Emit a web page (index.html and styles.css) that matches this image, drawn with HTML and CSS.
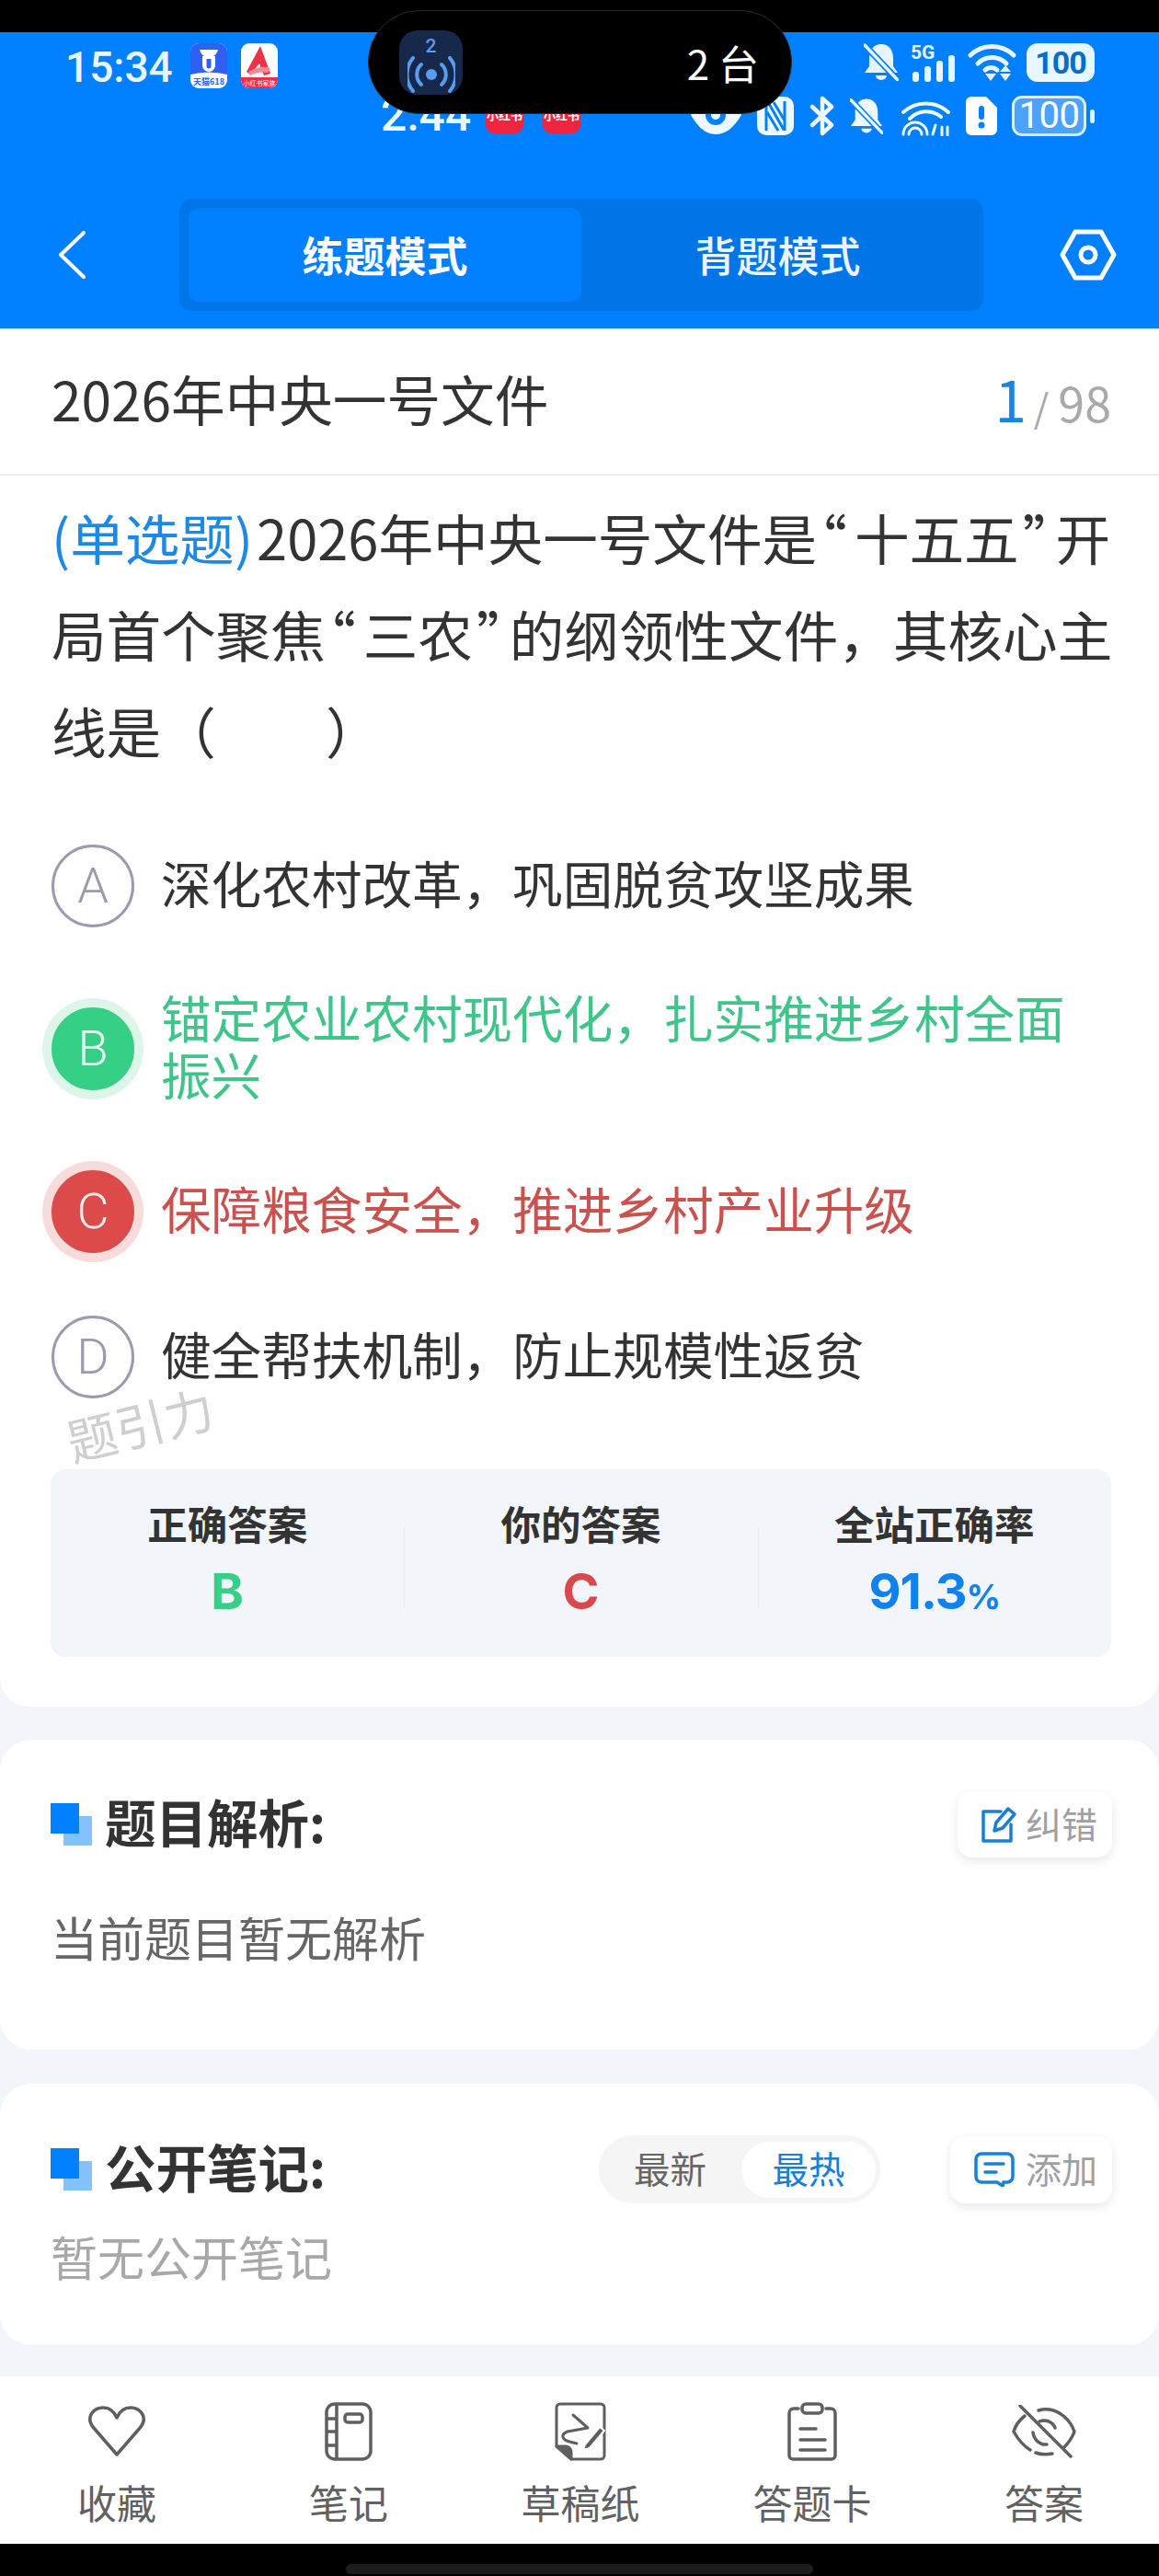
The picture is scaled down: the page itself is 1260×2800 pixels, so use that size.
FILE: index.html
```html
<!DOCTYPE html>
<html lang="zh-CN">
<head>
<meta charset="utf-8">
<title>2026年中央一号文件</title>
<link rel="stylesheet" href="styles.css">
</head>
<body>
<div class="page">
  <div class="sys-top"></div>

  <div class="island">
    <div class="island-app">
      <span class="island-num">2</span>
      <svg width="52" height="40" viewBox="0 0 52 40" fill="none" stroke="#5a9cf0" stroke-width="4" stroke-linecap="round">
        <circle cx="26" cy="20" r="6" fill="#5a9cf0" stroke="none"/>
        <path d="M15 9a15 15 0 0 0 0 22"/><path d="M37 9a15 15 0 0 1 0 22"/>
        <path d="M6 2a28 28 0 0 0 0 36"/><path d="M46 2a28 28 0 0 1 0 36"/>
      </svg>
    </div>
    <span class="island-text">2 台</span>
  </div>

  <header class="header">
    <div class="status-row status-one">
      <span class="clock">15:34</span>
      <svg class="app-ico" width="40" height="49" viewBox="0 0 40 49">
        <rect width="40" height="49" rx="9" fill="#fff"/>
        <path d="M0 9a9 9 0 0 1 9-9h22a9 9 0 0 1 9 9v25q-20 -5 -40 0z" fill="#2f60f2"/>
        <path d="M10 7q2 6 5 7h10q3-1 5-7M13 14h14v10a7 7 0 0 1-14 0zM17.500 17h5v8a2.500 2.500 0 0 1-5 0z" fill="#fff" fill-rule="evenodd"/>
        <text x="20" y="45" text-anchor="middle" class="app-label-blue">天猫618</text>
      </svg>
      <svg class="app-ico app-gap" width="40" height="49" viewBox="0 0 40 49">
        <rect width="40" height="49" rx="9" fill="#fff"/>
        <path d="M0 37h40v3a9 9 0 0 1-9 9H9a9 9 0 0 1-9-9z" fill="#ee2f49"/>
        <path d="M21 3l11 30-7 2-5-13-10 12-4-3z" fill="#ee3148"/>
        <path d="M8 31q14 -8 24 -4l-3 5q-10 -2 -19 3z" fill="#f58a94"/>
        <text x="20" y="46" text-anchor="middle" class="app-label-white">小红书家族</text>
      </svg>
      <div class="status-right">
        <svg width="38" height="41" viewBox="0 0 38 41">
          <path d="M19 1c8 0 13 6 13 15v9l5 7H1l5-7v-9C6 7 11 1 19 1z" fill="#e6f5ff"/>
          <path d="M13 35h12a6 5 0 0 1-12 0z" fill="#e6f5ff"/>
          <path d="M1 2l36 38" stroke="#0080ff" stroke-width="7"/>
          <path d="M1 2l36 38" stroke="#e6f5ff" stroke-width="3.500" stroke-linecap="round"/>
        </svg>
        <svg width="50" height="42" viewBox="0 0 50 42" class="ico-5g">
          <text x="1" y="17" class="label-5g">5G</text>
          <rect x="3" y="31" width="7" height="11" rx="3" fill="#e6f5ff"/>
          <rect x="16" y="25" width="7" height="17" rx="3" fill="#e6f5ff"/>
          <rect x="29" y="19" width="7" height="23" rx="3" fill="#e6f5ff"/>
          <rect x="42" y="13" width="7" height="29" rx="3" fill="#e6f5ff"/>
        </svg>
        <svg width="53" height="42" viewBox="0 0 53 42" fill="none" stroke="#e6f5ff" stroke-width="5" stroke-linecap="round" class="ico-wifi">
          <path d="M3 13a34 34 0 0 1 47 0"/><path d="M11 22a22 22 0 0 1 31 0"/>
          <path d="M19 29a10 10 0 0 1 13 0" />
          <path d="M19 33h12l-6 8z" fill="#e6f5ff" stroke="none"/>
          <path d="M41 24l6 7H35zM35 33h12l-6 8z" fill="#e6f5ff" stroke="none"/>
        </svg>
        <div class="bat-solid"><span>100</span></div>
      </div>
    </div>

    <div class="status-row status-two">
      <span class="clock clock-two">2:44</span>
      <span class="red-ico">小红书</span>
      <span class="red-ico red-gap">小红书</span>
      <div class="status-right status-right-two">
        <svg width="57" height="42" viewBox="0 0 57 42">
          <path d="M1 20C10 7 19 2 28 2s19 5 28 18c-9 15-18 21-28 21S10 35 1 20z" fill="#eef8ff"/>
          <circle cx="28" cy="20" r="11" fill="#0080ff"/><circle cx="28" cy="20" r="5" fill="#eef8ff"/>
        </svg>
        <svg width="40" height="42" viewBox="0 0 40 42" class="gap-16">
          <rect width="40" height="42" rx="10" fill="#eef8ff"/>
          <path d="M10 5v32M30 5v32M12 6l17 30M18 6l12 20M11 17l12 20" stroke="#0080ff" stroke-width="3" fill="none"/>
        </svg>
        <svg width="28" height="44" viewBox="0 0 28 44" fill="none" stroke="#eef8ff" stroke-width="4.500" stroke-linecap="round" stroke-linejoin="round" class="gap-17">
          <path d="M3 12l21 20-10 9V3l10 9-21 20"/>
        </svg>
        <svg width="36" height="42" viewBox="0 0 38 41" class="gap-16">
          <path d="M19 1c8 0 13 6 13 15v9l5 7H1l5-7v-9C6 7 11 1 19 1z" fill="#eef8ff"/>
          <path d="M13 35h12a6 5 0 0 1-12 0z" fill="#eef8ff"/>
          <path d="M1 2l36 38" stroke="#0080ff" stroke-width="7"/>
          <path d="M1 2l36 38" stroke="#eef8ff" stroke-width="3.500" stroke-linecap="round"/>
        </svg>
        <svg width="55" height="44" viewBox="0 0 55 44" fill="none" stroke="#eef8ff" stroke-width="4" stroke-linecap="round" class="gap-19">
          <path d="M3 18a36 36 0 0 1 49 0"/><path d="M10 25a25 25 0 0 1 34 -2"/>
          <path d="M3 42a13 13 0 1 1 26 0" stroke-width="3"/><path d="M9 42a7 7 0 1 1 14 0" stroke-width="3"/>
          <path d="M35 42l3-10" stroke-width="3"/><path d="M45 34v9M51 34v9" stroke-width="3"/>
        </svg>
        <svg width="34" height="42" viewBox="0 0 34 42" class="gap-16">
          <path d="M6 0h16l12 12v24a6 6 0 0 1-6 6H6a6 6 0 0 1-6-6V6a6 6 0 0 1 6-6z" fill="#fff"/>
          <rect x="14" y="10" width="6" height="15" rx="3" fill="#0080ff"/><circle cx="17" cy="31" r="3.500" fill="#0080ff"/>
        </svg>
        <div class="bat-line"><span>100</span></div>
        <i class="bat-cap"></i>
      </div>
    </div>

    <nav class="nav-row">
      <svg class="back" width="30" height="52" viewBox="0 0 30 52" fill="none" stroke="#fff" stroke-width="4" stroke-linecap="round" stroke-linejoin="round">
        <path d="M28 2L3 26l25 24"/>
      </svg>
      <div class="segment">
        <span class="seg-item seg-active">练题模式</span>
        <span class="seg-item">背题模式</span>
      </div>
      <svg class="gear" width="62" height="56" viewBox="0 0 62 56" fill="none" stroke="#fff" stroke-width="5" stroke-linejoin="round">
        <path d="M17 3h28l14 25-14 25H17L3 28z"/>
        <circle cx="31" cy="28" r="8"/>
      </svg>
    </nav>
  </header>

  <main class="card card-main">
    <div class="subhead">
      <h1 class="paper-title">2026年中央一号文件</h1>
      <div class="counter"><span class="counter-now">1</span><span class="counter-slash">/</span><span class="counter-all">98</span></div>
    </div>

    <p class="question"><span class="q-type">(单选题)</span>2026年中央一号文件是<span class="q-open">“</span>十五五<span class="q-close">”</span>开局首个聚焦<span class="q-open">“</span>三农<span class="q-close">”</span>的纲领性文件，其核心主线是（　　）</p>

    <div class="options">
      <div class="option"><span class="badge">A</span><span class="opt-text">深化农村改革，巩固脱贫攻坚成果</span></div>
      <div class="option option-ok"><span class="badge">B</span><span class="opt-text">锚定农业农村现代化，扎实推进乡村全面振兴</span></div>
      <div class="option option-bad"><span class="badge">C</span><span class="opt-text">保障粮食安全，推进乡村产业升级</span></div>
      <div class="option"><span class="badge">D</span><span class="opt-text">健全帮扶机制，防止规模性返贫</span></div>
    </div>
    <span class="watermark">题引力</span>

    <div class="stats">
      <div class="stat"><span class="stat-label">正确答案</span><span class="stat-value val-ok">B</span></div>
      <div class="stat"><span class="stat-label">你的答案</span><span class="stat-value val-bad">C</span></div>
      <div class="stat"><span class="stat-label">全站正确率</span><span class="stat-value val-rate">91.3<small>%</small></span></div>
    </div>
  </main>

  <section class="card card-analysis">
    <div class="sec-head">
      <i class="sec-mark"></i>
      <h2 class="sec-title">题目解析:</h2>
      <button class="mini-btn btn-fix">
        <svg width="40" height="40" viewBox="0 0 40 40" fill="none" stroke="#1a7fd8" stroke-width="3.500" stroke-linecap="round" stroke-linejoin="round">
          <path d="M22 6H3v32h30V20"/><path d="M15 27l2-9L30 3l7 6-13 15z"/>
        </svg>
        <span class="mini-label">纠错</span>
      </button>
    </div>
    <p class="sec-body">当前题目暂无解析</p>
  </section>

  <section class="card card-notes">
    <div class="sec-head">
      <i class="sec-mark"></i>
      <h2 class="sec-title">公开笔记:</h2>
      <div class="toggle">
        <span class="toggle-item">最新</span>
        <span class="toggle-item toggle-on">最热</span>
      </div>
      <button class="mini-btn btn-add">
        <svg width="44" height="38" viewBox="0 0 44 38" fill="none" stroke="#1a7fd8" stroke-width="3.500" stroke-linecap="round" stroke-linejoin="round">
          <path d="M8 2h28a6 6 0 0 1 6 6v19a6 6 0 0 1-6 6h-4l-1 4-6-4H8a6 6 0 0 1-6-6V8a6 6 0 0 1 6-6z"/><path d="M12 13h20M12 22h12"/>
        </svg>
        <span class="mini-label">添加</span>
      </button>
    </div>
    <p class="sec-body sec-empty">暂无公开笔记</p>
  </section>

  <footer class="tabbar">
    <div class="tab">
      <span class="tab-ico">
        <svg width="64" height="56" viewBox="0 0 64 56" fill="none" stroke="#5f5f5f" stroke-width="3.500" stroke-linejoin="round">
          <path d="M32 53L6 23C-3 10 9 2 17 2c7 0 12 4 15 11C35 6 40 2 47 2c8 0 20 8 11 21z"/>
        </svg>
      </span>
      <span class="tab-label">收藏</span>
    </div>
    <div class="tab">
      <span class="tab-ico">
        <svg width="52" height="64" viewBox="0 0 52 64" fill="none" stroke="#5f5f5f" stroke-width="3.500" stroke-linejoin="round">
          <rect x="2" y="2" width="48" height="60" rx="9"/>
          <path d="M13 2v60M2 18h11M2 32h11M2 47h11"/>
          <rect x="22" y="13" width="19" height="9" rx="3"/>
        </svg>
      </span>
      <span class="tab-label">笔记</span>
    </div>
    <div class="tab">
      <span class="tab-ico">
        <svg width="56" height="64" viewBox="0 0 56 64" fill="none" stroke="#5f5f5f" stroke-width="3" stroke-linecap="round" stroke-linejoin="round">
          <path d="M18 62h32a4 4 0 0 0 4-4V6a4 4 0 0 0-4-4H6a4 4 0 0 0-4 4v42z"/>
          <path d="M2 48h10a6 6 0 0 1 6 6v8z" fill="#5f5f5f"/>
          <path d="M20 14l16 14-22 4c-8 3-6 9 2 11l8 2"/>
          <path d="M33 46l16-19 5 4-16 19-7 2z" fill="#5f5f5f" stroke="#fff" stroke-width="2"/>
        </svg>
      </span>
      <span class="tab-label">草稿纸</span>
    </div>
    <div class="tab">
      <span class="tab-ico">
        <svg width="54" height="64" viewBox="0 0 54 64" fill="none" stroke="#5f5f5f" stroke-width="3.500" stroke-linecap="round" stroke-linejoin="round">
          <path d="M12 7H7a5 5 0 0 0-5 5v46a4 4 0 0 0 4 4h42a4 4 0 0 0 4-4V12a5 5 0 0 0-5-5h-5"/>
          <rect x="16" y="2" width="22" height="10" rx="4"/>
          <path d="M14 29h17M14 41h27M14 52h27"/>
        </svg>
      </span>
      <span class="tab-label">答题卡</span>
    </div>
    <div class="tab">
      <span class="tab-ico">
        <svg width="70" height="58" viewBox="0 0 70 58" fill="none" stroke="#5f5f5f" stroke-width="3.500" stroke-linecap="round" stroke-linejoin="round">
          <path d="M14 12Q5 19 2 29q8 14 18 20M29 6q6-2 12-1c11 2 22 10 27 24q-3 9-12 18M44 53q-10 2-18-1"/>
          <path d="M30 18c7-3 15 1 17 7M23 30c1 8 8 14 15 13"/>
          <path d="M9 1l55 55"/>
        </svg>
      </span>
      <span class="tab-label">答案</span>
    </div>
  </footer>

  <div class="sys-bottom"><i class="home-bar"></i></div>
</div>
</body>
</html>
```
FILE: styles.css
```css
* { box-sizing: border-box; }
html, body { margin: 0; padding: 0; }
body {
  width: 1260px;
  height: 2800px;
  overflow: hidden;
  background: #f2f5f9;
  font-family: "Noto Sans CJK SC", "Noto Sans", sans-serif;
  color: #333;
}
h1, h2, p { margin: 0; font-weight: 400; }
button { border: 0; font: inherit; }

.page {
  position: relative;
  display: flex;
  flex-direction: column;
  width: 1260px;
  height: 2800px;
}

.sys-top { height: 35px; background: #000; flex: none; }

/* floating island */
.island {
  position: absolute;
  left: 400px;
  top: 11px;
  width: 461px;
  height: 113px;
  background: #000;
  border-radius: 56px;
  border: 1px solid #2b2b2b;
  display: flex;
  align-items: center;
  padding-left: 33px;
  z-index: 5;
}
.island-app {
  width: 69px;
  height: 70px;
  border-radius: 20px;
  background: #16294a;
  display: flex;
  flex-direction: column;
  align-items: center;
  padding-top: 8px;
}
.island-num {
  font-family: "Roboto", sans-serif;
  font-weight: 500;
  font-size: 21px;
  line-height: 19px;
  color: #5a9cf0;
  margin-bottom: 1px;
}
.island-text {
  margin-left: auto;
  margin-right: 35px;
  color: #fff;
  font-size: 44px;
  line-height: 60px;
  white-space: pre;
}

/* header */
.header {
  flex: none;
  height: 322px;
  background: #0080ff;
  color: #e8f6ff;
  padding-top: 12px;
}
.status-row { display: flex; align-items: flex-start; }
.status-one { height: 49px; padding-left: 71px; }
.status-two { height: 44px; margin-top: 8px; padding-left: 414px; }
.clock {
  font-family: "Roboto", sans-serif;
  font-weight: 500;
  font-size: 46px;
  line-height: 52px;
  color: #e8f6ff;
}
.clock-two { width: 114px; font-size: 50px; line-height: 52px; color: #eef8ff; margin-top: -5px; }
.app-ico { margin-left: 19px; }
.app-gap { margin-left: 15px; }
.app-label-blue { font-size: 9px; fill: #2f60f2; font-weight: 700; }
.app-label-white { font-size: 7px; fill: #fff; }
.status-right { margin-left: auto; display: flex; align-items: flex-start; padding-right: 70px; }
.ico-5g { margin-left: 12px; overflow: visible; }
.label-5g { font-family: "Roboto", sans-serif; font-weight: 700; font-size: 21px; fill: #e6f5ff; }
.ico-wifi { margin-left: 13px; }
.bat-solid {
  margin-left: 11px;
  width: 74px;
  height: 42px;
  background: #e8f6ff;
  border-radius: 12px;
  color: #0a6cc9;
  font-family: "Roboto", sans-serif;
  font-weight: 700;
  font-size: 34px;
  line-height: 42px;
  text-align: center;
  letter-spacing: -1px;
}
.red-ico {
  width: 41px;
  height: 41px;
  border-radius: 9px;
  background: #f02440;
  color: #fff;
  font-size: 13px;
  font-weight: 700;
  line-height: 41px;
  text-align: center;
  white-space: nowrap;
}
.red-gap { margin-left: 21px; }
.status-right-two { align-items: center; }
.gap-16 { margin-left: 16px; }
.gap-17 { margin-left: 17px; }
.gap-19 { margin-left: 19px; }
.bat-line {
  margin-left: 16px;
  width: 81px;
  height: 44px;
  border: 3px solid #d5edff;
  border-radius: 11px;
  background: #4ba3ff;
  color: #fff;
  font-family: "Roboto", sans-serif;
  font-size: 40px;
  line-height: 38px;
  text-align: center;
  letter-spacing: -.5px;
}
.bat-cap { width: 5px; height: 15px; margin-left: 4px; border-radius: 3px; background: #e8f6ff; }

.nav-row {
  display: flex;
  align-items: center;
  height: 122px;
  margin-top: 68px;
  padding-left: 63px;
}
.back { flex: none; }
.segment {
  margin-left: 102px;
  width: 874px;
  height: 122px;
  background: #0075e8;
  border-radius: 14px;
  padding: 10px;
  display: flex;
}
.seg-item {
  flex: 1;
  text-align: center;
  color: #e9f6ff;
  font-size: 45px;
  font-weight: 500;
  line-height: 102px;
  border-radius: 12px;
}
.seg-active { background: #0080ff; font-weight: 700; flex: 0 0 427px; color: #fff; }
.gear { margin-left: 83px; }

/* cards */
.card { background: #fff; flex: none; }
.card-main {
  position: relative;
  border-radius: 0 0 32px 32px;
  padding-bottom: 54px;
}
.subhead {
  display: flex;
  align-items: center;
  justify-content: space-between;
  height: 160px;
  padding: 0 52px 6px 56px;
  border-bottom: 2px solid #eeeeee;
}
.paper-title { font-size: 58.6px; line-height: 80px; color: #333; }
.counter { display: flex; align-items: baseline; }
.counter-now { font-size: 62px; line-height: 80px; color: #1a84e0; }
.counter-slash { font-size: 42px; color: #a9a9a9; margin-left: 8px; margin-right: 10px; }
.counter-all { font-size: 52px; color: #a9a9a9; }

.question {
  font-size: 59.6px;
  line-height: 105px;
  padding: 14px 48px 0 56px;
  color: #333;
}
.q-type { color: #1e88e5; margin-right: 4px; }
.q-open { font-feature-settings: "halt"; padding-left: 3px; padding-right: 8px; }
.q-close { font-feature-settings: "halt"; padding-left: 4px; padding-right: 6px; }

.options {
  display: flex;
  flex-direction: column;
  gap: 66px;
  padding: 72px 50px 0 56px;
}
.option { display: flex; align-items: center; gap: 29px; }
.badge {
  flex: none;
  width: 90px;
  height: 90px;
  border-radius: 50%;
  border: 3px solid #9a9cae;
  color: #9a9cae;
  font-family: "Roboto", sans-serif;
  font-weight: 300;
  font-size: 54px;
  line-height: 84px;
  text-align: center;
}
.opt-text { font-size: 54.6px; line-height: 62px; color: #333; padding-bottom: 8px; }
.option-ok .badge {
  background: #35cf85;
  border-color: #35cf85;
  color: #e9fff3;
  box-shadow: 0 0 0 10px #def6ea;
}
.option-ok .opt-text { color: #3fc48a; }
.option-bad { margin-bottom: 2px; }
.option-bad .badge {
  background: #dd4a4a;
  border-color: #dd4a4a;
  color: #ffecec;
  box-shadow: 0 0 0 10px #f8dcdc;
}
.option-bad .opt-text { color: #c9524f; }

.watermark {
  position: absolute;
  left: 71px;
  top: 1155px;
  font-size: 54px;
  line-height: 70px;
  color: #cfcfcf;
  transform: rotate(-14deg);
}

.stats {
  display: grid;
  grid-template-columns: repeat(3, 1fr);
  height: 204px;
  margin: 77px 52px 0 55px;
  padding-top: 29px;
  background: #f2f5f9;
  border-radius: 16px;
}
.stat { position: relative; display: flex; flex-direction: column; align-items: center; }
.stat + .stat::before {
  content: "";
  position: absolute;
  left: 0;
  top: 33px;
  height: 90px;
  width: 1px;
  background: #e9ecf1;
}
.stat-label { font-size: 43.5px; font-weight: 700; line-height: 60px; color: #333; }
.stat-value {
  margin-top: 14px;
  font-family: "Inter", sans-serif;
  font-size: 54px;
  font-weight: 700;
  line-height: 60px;
}
.stat-value small { font-size: 37px; }
.val-ok { color: #35cf85; }
.val-bad { color: #d9484c; }
.val-rate { color: #0f82f0; letter-spacing: -1px; }

.card-analysis {
  margin-top: 36px;
  height: 337px;
  border-radius: 34px;
  padding: 56px 51px 0 55px;
}
.card-notes {
  margin-top: 37px;
  height: 284px;
  border-radius: 34px;
  padding: 56px 51px 0 55px;
}
.sec-head { display: flex; align-items: center; height: 72px; }
.card-notes .sec-head { height: 74px; }
.sec-mark {
  flex: none;
  width: 45px;
  height: 46px;
  margin-right: 14px;
  background: linear-gradient(#0080ff, #0080ff) 0 0 / 31px 33px no-repeat,
              linear-gradient(#84c1ff, #84c1ff) 14px 14px / 31px 32px no-repeat;
}
.sec-title { font-size: 55.5px; font-weight: 700; line-height: 64px; padding-bottom: 8px; color: #333; }
.mini-btn {
  margin-left: auto;
  display: flex;
  align-items: center;
  height: 72px;
  padding: 0 16px 0 25px;
  gap: 9px;
  background: #fff;
  border-radius: 16px;
  color: #a0a0a0;
  font-size: 39px;
  box-shadow: 0 4px 12px rgba(0, 0, 0, .09);
}
.mini-label { line-height: 52px; padding-bottom: 5px; }
.btn-add { margin-left: 76px; padding-left: 26px; gap: 12px; height: 73px; }
.toggle {
  margin-left: auto;
  display: flex;
  align-items: center;
  width: 306px;
  height: 74px;
  background: #f5f5f5;
  border-radius: 37px;
}
.toggle-item {
  flex: 0 0 155px;
  text-align: center;
  font-size: 39.5px;
  line-height: 55px;
  padding-bottom: 6px;
  color: #666;
}
.toggle-on {
  flex: 0 0 146px;
  background: #fff;
  border-radius: 31px;
  color: #1a7fd8;
}
.sec-body { margin-top: 56px; font-size: 51px; line-height: 60px; color: #666; }
.sec-empty { margin-top: 27px; color: #a8a8a8; }

/* bottom tab bar */
.tabbar {
  flex: none;
  margin-top: auto;
  height: 182px;
  background: #fff;
  display: grid;
  grid-template-columns: repeat(5, 252px);
  padding: 28px 0 0 1px;
}
.tab { display: flex; flex-direction: column; align-items: center; }
.tab-ico { display: flex; align-items: center; justify-content: center; height: 64px; }
.tab-label { margin-top: 14px; font-size: 43px; line-height: 60px; color: #616161; }

.sys-bottom {
  flex: none;
  height: 35px;
  background: #000;
  display: flex;
  justify-content: center;
  padding-top: 22px;
}
.home-bar {
  display: block;
  width: 508px;
  height: 11px;
  border-radius: 6px;
  background: #1c1c1c;
}
```
